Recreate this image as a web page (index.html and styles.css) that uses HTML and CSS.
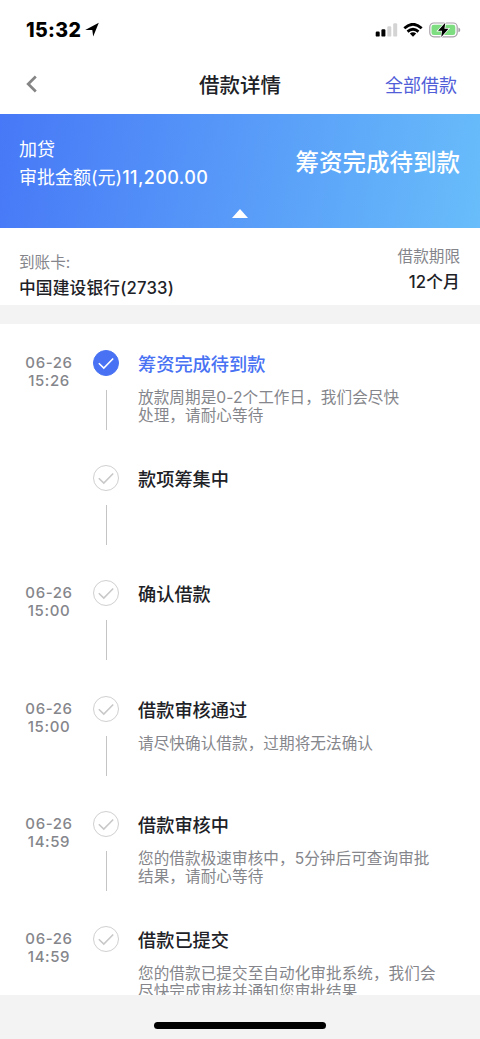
FILE: index.html
```html
<!DOCTYPE html>
<html lang="zh-CN">
<head>
<meta charset="utf-8">
<meta name="viewport" content="width=device-width, initial-scale=1">
<title>借款详情</title>
<link rel="stylesheet" href="styles.css">
</head>
<body>
<svg class="defs" width="0" height="0">
  <symbol id="check" viewBox="0 0 26 26"><path d="M5.2 13.3 10.6 18.6 20.8 8.2" fill="none" stroke="currentColor" stroke-width="1.7"/></symbol>
</svg>
<div class="screen">
  <header class="status-bar">
    <div class="clock"><span>15:32</span>
      <svg width="14" height="15" viewBox="0 0 14 15"><path d="M13.8.8 8.2 14.4 7.3 7.9.2 8.1Z"/></svg>
    </div>
    <div class="indicators">
      <svg width="23" height="14" viewBox="0 0 23 14">
        <rect x="0.7" y="8.6" width="4" height="5" rx="1.2"/><rect x="6.4" y="6.2" width="4" height="7.4" rx="1.2"/>
        <rect x="12.3" y="3.2" width="4" height="10.4" rx="1.2" fill="#d4d4d4"/><rect x="18.2" y="0.2" width="4" height="13.4" rx="1.2" fill="#d4d4d4"/>
      </svg>
      <svg class="wifi" width="20" height="14" viewBox="0 0 20 14">
        <path d="M1.3 5.2Q10-2.7 18.7 5.2M4.5 8.6Q10 3.9 15.5 8.6" fill="none" stroke="#000" stroke-width="2.7"/>
        <path d="M6.8 10.5Q10 7.8 13.2 10.5L10 13.8Z"/>
      </svg>
      <svg class="battery" width="32" height="16" viewBox="0 0 32 16">
        <rect x=".8" y="1" width="27.4" height="13.8" rx="4" fill="#fff" stroke="#a8a0a9" stroke-width="1.2"/>
        <rect x="2.5" y="2.8" width="23.8" height="10.2" rx="2.3" fill="#7ddd80"/>
        <path d="M29.4 5.5Q31.3 6.2 31.3 7.9T29.4 10.3Z" fill="#a8a0a9"/>
        <path d="M16.3.8 9 8.8H13L12.3 15 19.5 6.8H15.4Z" stroke="#fff" stroke-width="1.5" paint-order="stroke"/>
      </svg>
    </div>
  </header>
  <nav class="nav-bar">
    <svg width="12" height="18" viewBox="0 0 12 18"><path d="M9.8 1.5 2.2 9 9.8 16.5" fill="none" stroke="#858585" stroke-width="2.7"/></svg>
    <h1 class="title">借款详情</h1>
    <span class="all-loans">全部借款</span>
  </nav>
  <section class="summary">
    <div class="amount"><div>加贷</div><div>审批金额(元)<span class="figure">11,200.00</span></div></div>
    <div class="state">筹资完成待到款</div>
    <div class="pointer"></div>
  </section>
  <section class="account">
    <div class="card"><div class="label">到账卡:</div><div class="value">中国建设银行(2733)</div></div>
    <div class="term"><div class="label">借款期限</div><div class="value">12个月</div></div>
  </section>
  <main class="timeline">
    <div class="step current">
      <div class="time">06-26<br>15:26</div>
      <div class="track"><svg class="dot"><use href="#check"/></svg><i class="line"></i></div>
      <div class="detail"><h2>筹资完成待到款</h2><p>放款周期是0-2个工作日，我们会尽快<br>处理，请耐心等待</p></div>
    </div>
    <div class="step">
      <div class="time"></div>
      <div class="track"><svg class="dot"><use href="#check"/></svg><i class="line"></i></div>
      <div class="detail"><h2>款项筹集中</h2></div>
    </div>
    <div class="step">
      <div class="time">06-26<br>15:00</div>
      <div class="track"><svg class="dot"><use href="#check"/></svg><i class="line"></i></div>
      <div class="detail"><h2>确认借款</h2></div>
    </div>
    <div class="step">
      <div class="time">06-26<br>15:00</div>
      <div class="track"><svg class="dot"><use href="#check"/></svg><i class="line"></i></div>
      <div class="detail"><h2>借款审核通过</h2><p>请尽快确认借款，过期将无法确认</p></div>
    </div>
    <div class="step">
      <div class="time">06-26<br>14:59</div>
      <div class="track"><svg class="dot"><use href="#check"/></svg><i class="line"></i></div>
      <div class="detail"><h2>借款审核中</h2><p>您的借款极速审核中，5分钟后可查询审批<br>结果，请耐心等待</p></div>
    </div>
    <div class="step">
      <div class="time">06-26<br>14:59</div>
      <div class="track"><svg class="dot"><use href="#check"/></svg></div>
      <div class="detail"><h2>借款已提交</h2><p>您的借款已提交至自动化审批系统，我们会<br>尽快完成审核并通知您审批结果</p></div>
    </div>
  </main>
  <footer class="home-area"><div class="home-indicator"></div></footer>
</div>
</body>
</html>
```
FILE: styles.css
```css
* { box-sizing: border-box; }
body { margin: 0; font-family: Inter, "Noto Sans CJK SC", sans-serif; color: #202126; background: #fff; }
h1, h2, p { margin: 0; }
svg { display: block; flex: none; }
.defs { position: absolute; }
.screen { width: 480px; height: 1039px; display: flex; flex-direction: column; overflow: hidden; white-space: nowrap; }

.status-bar { height: 58px; flex: none; display: flex; justify-content: space-between; align-items: center; padding: 1px 19px 0 26px; color: #000; }
.clock { display: flex; align-items: center; gap: 4px; font-size: 19.5px; font-weight: 800; letter-spacing: .35px; }
.indicators { display: flex; align-items: center; }
.wifi { margin-left: 5px; }
.battery { margin-left: 6px; }

.nav-bar { height: 56px; flex: none; display: grid; grid-template-columns: 1fr auto 1fr; align-items: center; padding: 0 23px 4px 26px; }
.title { font-size: 20.5px; font-weight: 500; line-height: 30px; margin-right: 3px; padding-top: 3px; }
.all-loans { justify-self: end; font-size: 18px; color: #515ed8; line-height: 28px; padding-top: 3px; }

.summary { position: relative; height: 114px; flex: none; display: flex; justify-content: space-between; padding: 22px 20px 0 19px; color: #fff; background: linear-gradient(100deg, #4778f7, #68bdfa); }
.amount { font-size: 18px; line-height: 28px; }
.figure { font-weight: 500; letter-spacing: .4px; }
.state { font-size: 23.5px; font-weight: 500; line-height: 32px; padding-top: 11px; }
.pointer { position: absolute; left: 232px; bottom: 10px; border: solid transparent; border-width: 0 8px 9px; border-bottom-color: #fff; }

.account { height: 77px; flex: none; display: flex; justify-content: space-between; padding: 16px 20px 0 19px; line-height: 26px; }
.card { padding-top: 6px; }
.card .value { margin-top: -1px; }
.term { text-align: right; }
.term .value { margin-top: -1px; }
.label { font-size: 15.6px; color: #85868b; }
.value { font-size: 16.7px; font-weight: 500; letter-spacing: .18px; }

.timeline { flex: 1; min-height: 0; overflow: hidden; border-top: 19px solid #f3f3f3; padding: 26px 0 0 19px; }
.step { height: 115.2px; display: grid; grid-template-columns: 60px 54px 1fr; }
.time { padding-top: 4px; font-size: 15px; font-weight: 500; line-height: 18px; letter-spacing: .6px; text-align: center; color: #85868b; }
.track { display: flex; flex-direction: column; align-items: center; gap: 14px; }
.dot { width: 26px; height: 26px; border: 1.5px solid #d0d0d0; border-radius: 50%; color: #c8c8c8; }
.current .dot { border-color: #4872f3; background: #4872f3; color: #fff; }
.line { width: 1px; height: 40px; background: #c4c4c4; }
.detail { padding-left: 5px; }
.detail h2 { font-size: 18.2px; font-weight: 500; line-height: 28px; }
.current h2 { color: #4872f3; }
.detail p { margin-top: 11px; font-size: 15.6px; line-height: 18px; letter-spacing: .07px; color: #85868b; }

.home-area { height: 44px; flex: none; display: flex; justify-content: center; padding-top: 27px; background: #f3f3f3; }
.home-indicator { width: 172px; height: 7px; border-radius: 4px; background: #000; }
```
